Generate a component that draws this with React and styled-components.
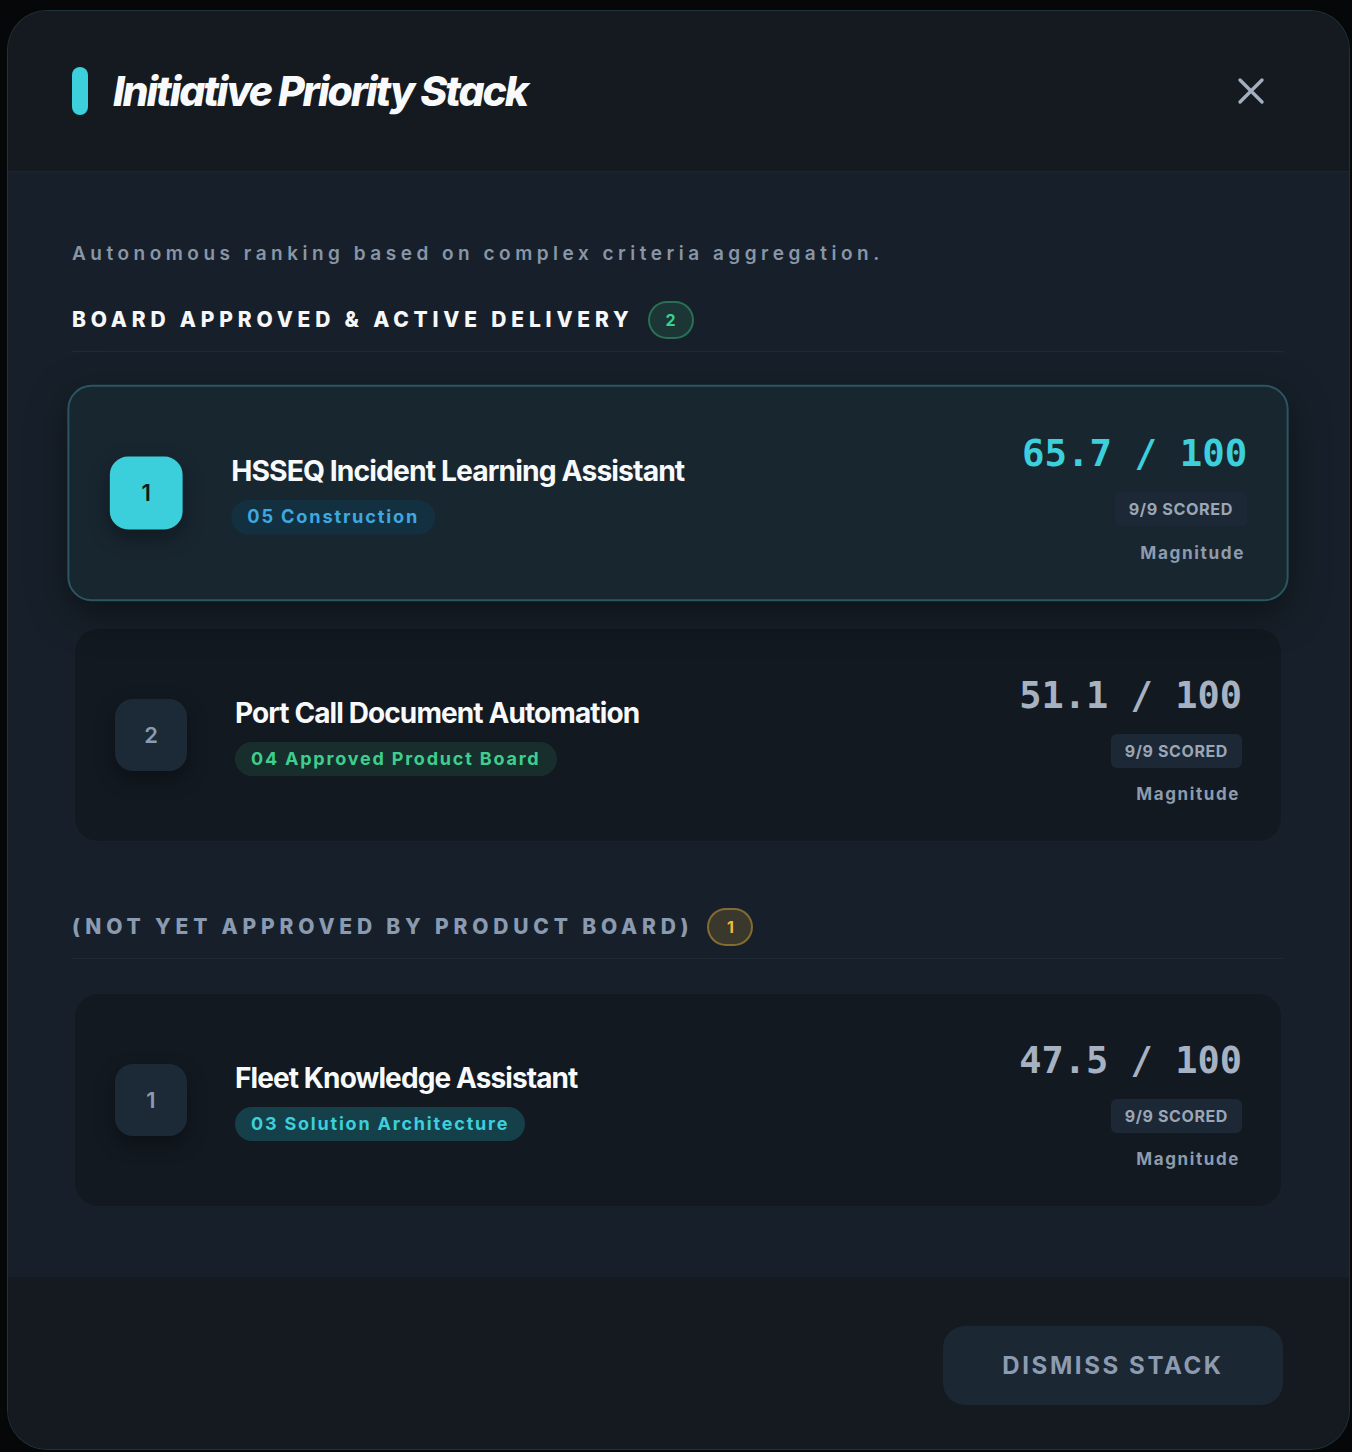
import React from "react";
import styled, { createGlobalStyle } from "styled-components";

const sections = [
  {
    title: "BOARD APPROVED & ACTIVE DELIVERY",
    tone: "green",
    muted: false,
    items: [
      { rank: 1, name: "HSSEQ Incident Learning Assistant", tag: "05 Construction", tagTone: "blue", score: "65.7", active: true },
      { rank: 2, name: "Port Call Document Automation", tag: "04 Approved Product Board", tagTone: "green", score: "51.1" },
    ],
  },
  {
    title: "(NOT YET APPROVED BY PRODUCT BOARD)",
    tone: "amber",
    muted: true,
    items: [
      { rank: 1, name: "Fleet Knowledge Assistant", tag: "03 Solution Architecture", tagTone: "cyan", score: "47.5" },
    ],
  },
];

const tones = {
  green: { bg: "rgba(62, 207, 142, 0.12)", border: "rgba(62, 207, 142, 0.38)", fg: "#3ecf8e" },
  amber: { bg: "rgba(240, 184, 56, 0.16)", border: "rgba(240, 184, 56, 0.4)", fg: "#f2bb3a" },
  blue: { bg: "#12303f", fg: "#3ea8e2" },
  cyan: { bg: "#164049", fg: "#3ccfdc" },
};

export default function App() {
  return (
    <>
      <Global />
      <Modal>
        <Header>
          <TitleWrap>
            <Accent />
            <Title>Initiative Priority Stack</Title>
          </TitleWrap>
          <CloseButton aria-label="Close">
            <svg width="28" height="28" viewBox="0 0 28 28" fill="none">
              <path d="M3 3L25 25M25 3L3 25" stroke="#a3afbf" strokeWidth="3.4" strokeLinecap="round" />
            </svg>
          </CloseButton>
        </Header>

        <Body>
          <Subtitle>Autonomous ranking based on complex criteria aggregation.</Subtitle>
          {sections.map((section) => (
            <Section key={section.title}>
              <SectionHead>
                <SectionTitle $muted={section.muted}>{section.title}</SectionTitle>
                <CountBadge $tone={section.tone}>{section.items.length}</CountBadge>
              </SectionHead>
              <CardList>
                {section.items.map((item) => (
                  <Card key={item.name} $active={item.active}>
                    <Rank $active={item.active}>{item.rank}</Rank>
                    <Info>
                      <Name>{item.name}</Name>
                      <Tag $tone={item.tagTone}>{item.tag}</Tag>
                    </Info>
                    <ScoreCol>
                      <Score $active={item.active}>{item.score} / 100</Score>
                      <Scored>9/9 SCORED</Scored>
                      <Magnitude>Magnitude</Magnitude>
                    </ScoreCol>
                  </Card>
                ))}
              </CardList>
            </Section>
          ))}
        </Body>

        <Footer>
          <DismissButton>DISMISS STACK</DismissButton>
        </Footer>
      </Modal>
    </>
  );
}

const Global = createGlobalStyle`
  html, body {
    margin: 0;
    background: #050708;
  }
  body {
    font-family: Inter, "Noto Sans", sans-serif;
    color: #f4f6f8;
  }
  * {
    box-sizing: border-box;
  }
`;

const Modal = styled.div`
  margin: 10px 2px 2px 7px;
  width: 1343px;
  height: 1440px;
  display: flex;
  flex-direction: column;
  border: 1px solid rgba(70, 120, 115, 0.28);
  border-radius: 40px;
  overflow: hidden;
  background: #141a20;
`;

const Header = styled.header`
  height: 160px;
  flex: none;
  display: flex;
  align-items: center;
  justify-content: space-between;
  padding: 0 84px 0 64px;
  background: #141a20;
`;

const TitleWrap = styled.div`
  display: flex;
  align-items: center;
  gap: 25px;
`;

const Accent = styled.span`
  width: 16px;
  height: 48px;
  border-radius: 8px;
  background: #3ccfdc;
`;

const Title = styled.h1`
  margin: 0;
  font-size: 41px;
  font-weight: 800;
  font-style: italic;
  letter-spacing: -2.1px;
  color: #f7f9fb;
`;

const CloseButton = styled.button`
  border: none;
  background: none;
  padding: 0;
  display: flex;
  cursor: pointer;
`;

const Body = styled.main`
  flex: none;
  padding: 70px 66px 70px 64px;
  background: #17202a;
  border-top: 1px solid #1a252c;
`;

const Subtitle = styled.p`
  margin: 0 0 35px;
  font-size: 19px;
  line-height: 24px;
  font-weight: 600;
  letter-spacing: 4.5px;
  color: #8896a8;
`;

const Section = styled.section`
  & + & {
    margin-top: 66px;
  }
`;

const SectionHead = styled.div`
  display: flex;
  align-items: center;
  gap: 14px;
  padding-bottom: 12px;
  border-bottom: 1px solid #1f2a33;
`;

const SectionTitle = styled.h2`
  margin: 0;
  font-size: 21px;
  line-height: 38px;
  font-weight: 800;
  letter-spacing: 4.8px;
  color: ${(p) => (p.$muted ? "#8a9ab0" : "#f5f7f9")};
`;

const CountBadge = styled.span`
  width: 46px;
  height: 38px;
  border-radius: 19px;
  display: flex;
  align-items: center;
  justify-content: center;
  font-size: 16px;
  font-weight: 700;
  background: ${(p) => tones[p.$tone].bg};
  border: 2px solid ${(p) => tones[p.$tone].border};
  color: ${(p) => tones[p.$tone].fg};
`;

const CardList = styled.div`
  display: flex;
  flex-direction: column;
  gap: 28px;
  margin-top: 34px;
  padding: 0 1px 0 2px;
`;

const Card = styled.div`
  height: 214px;
  display: flex;
  align-items: center;
  padding: 0 39px 0 40px;
  border-radius: 24px;
  background: ${(p) => (p.$active ? "#182630" : "#121920")};
  border: ${(p) => (p.$active ? "2px solid #2a5561" : "1px solid rgba(255, 255, 255, 0.03)")};
  box-shadow: ${(p) => (p.$active ? "0 12px 40px rgba(0, 0, 0, 0.45)" : "none")};
  transform: ${(p) => (p.$active ? "scale(1.011)" : "none")};
`;

const Rank = styled.div`
  width: 72px;
  height: 72px;
  flex: none;
  border-radius: 18px;
  display: flex;
  align-items: center;
  justify-content: center;
  font-size: 22px;
  font-weight: 600;
  background: ${(p) => (p.$active ? "#3bcfdc" : "#1c2a37")};
  color: ${(p) => (p.$active ? "#0f1a20" : "#8b9ab0")};
  box-shadow: 0 8px 20px rgba(0, 0, 0, 0.35);
`;

const Info = styled.div`
  flex: 1;
  display: flex;
  flex-direction: column;
  align-items: flex-start;
  gap: 11px;
  margin-left: 48px;
`;

const Name = styled.div`
  font-size: 28px;
  line-height: 36px;
  font-weight: 700;
  letter-spacing: -0.9px;
  color: #f7f9fb;
`;

const Tag = styled.span`
  height: 34px;
  padding: 0 16px;
  border-radius: 17px;
  display: flex;
  align-items: center;
  font-size: 18px;
  font-weight: 700;
  letter-spacing: 1.8px;
  background: ${(p) => tones[p.$tone].bg};
  color: ${(p) => tones[p.$tone].fg};
`;

const ScoreCol = styled.div`
  display: flex;
  flex-direction: column;
  align-items: flex-end;
  margin-top: 10px;
`;

const Score = styled.div`
  font-family: "DejaVu Sans Mono", "Liberation Mono", monospace;
  font-size: 37px;
  line-height: 44px;
  font-weight: 700;
  color: ${(p) => (p.$active ? "#3ccfdc" : "#a6b1c1")};
`;

const Scored = styled.span`
  margin-top: 16px;
  height: 34px;
  padding: 0 14px;
  border-radius: 6px;
  display: flex;
  align-items: center;
  font-size: 16px;
  font-weight: 700;
  letter-spacing: 0.6px;
  background: #1c2835;
  color: #9aa6b6;
`;

const Magnitude = styled.span`
  margin-top: 14px;
  padding-right: 2px;
  font-size: 17px;
  line-height: 24px;
  font-weight: 700;
  letter-spacing: 1.6px;
  color: #8e9bad;
`;

const Footer = styled.footer`
  flex: 1;
  display: flex;
  justify-content: flex-end;
  align-items: flex-start;
  padding: 49px 66px 0 0;
  background: #141a20;
`;

const DismissButton = styled.button`
  width: 340px;
  height: 79px;
  border: none;
  border-radius: 22px;
  background: #1c2734;
  color: #8d9bb0;
  font-family: Inter, "Noto Sans", sans-serif;
  font-size: 24px;
  font-weight: 700;
  letter-spacing: 2.6px;
  cursor: pointer;
`;
